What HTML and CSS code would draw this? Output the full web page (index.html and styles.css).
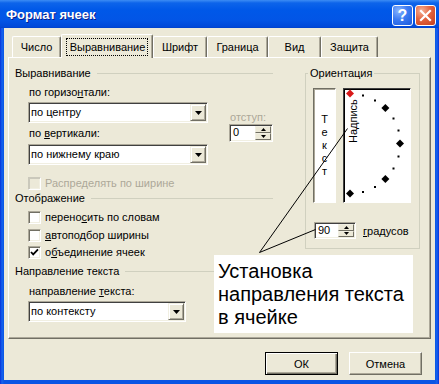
FILE: index.html
```html
<!DOCTYPE html>
<html lang="ru">
<head>
<meta charset="utf-8">
<title>Формат ячеек</title>
<link rel="stylesheet" href="styles.css">
</head>
<body>
<div class="window">
  <div class="titlebar">
    <span class="title">Формат ячеек</span>
    <div class="caption-buttons">
      <span class="cap-btn help">?</span>
      <span class="cap-btn close"><svg width="13" height="13" viewBox="0 0 13 13"><path d="M2 2 L11 11 M11 2 L2 11" stroke="#fff" stroke-width="2.2" stroke-linecap="square"/></svg></span>
    </div>
  </div>
  <div class="client">
    <div class="tabs">
      <div class="tab w-num">Число</div>
      <div class="tab active w-align"><span class="focus">Выравнивание</span></div>
      <div class="tab w-font">Шрифт</div>
      <div class="tab w-border">Граница</div>
      <div class="tab w-view">Вид</div>
      <div class="tab w-prot">Защита</div>
    </div>
    <div class="panel">
      <div class="left">
        <div class="group-title">Выравнивание</div>
        <div class="align-row">
          <div class="align-main">
            <div class="label">по горизо<u>н</u>тали:</div>
            <div class="combo combo-wide"><span class="combo-text">по центру</span><span class="drop"><svg width="7" height="4" viewBox="0 0 7 4"><path d="M0 0H7L3.5 4Z" fill="#000"/></svg></span></div>
            <div class="label gap3">по <u>в</u>ертикали:</div>
            <div class="combo combo-wide gap4"><span class="combo-text">по нижнему краю</span><span class="drop"><svg width="7" height="4" viewBox="0 0 7 4"><path d="M0 0H7L3.5 4Z" fill="#000"/></svg></span></div>
          </div>
          <div class="indent">
            <div class="label disabled">отступ:</div>
            <div class="spin spin-indent"><span class="spin-text">0</span><span class="spin-btns"><span class="spin-b"><svg width="5" height="3" viewBox="0 0 5 3"><path d="M0 3H5L2.5 0Z" fill="#000"/></svg></span><span class="spin-b"><svg width="5" height="3" viewBox="0 0 5 3"><path d="M0 0H5L2.5 3Z" fill="#000"/></svg></span></span></div>
          </div>
        </div>
        <div class="check check-disabled disabled"><span class="box"></span><span>Распределять по ширине</span></div>
        <div class="group-title gt-display">Отображение</div>
        <div class="check c1"><span class="box"></span><span>перено<u>с</u>ить по словам</span></div>
        <div class="check c2"><span class="box"></span><span><u>а</u>втоподбор ширины</span></div>
        <div class="check c3"><span class="box"><svg width="11" height="11" viewBox="0 0 11 11"><path d="M2 5 L4.2 7.4 L9 2.4" fill="none" stroke="#000" stroke-width="1.8"/></svg></span><span>о<u>б</u>ъединение ячеек</span></div>
        <div class="group-title gt-dir">Направление текста</div>
        <div class="label gap6">направление <u>т</u>екста:</div>
        <div class="combo combo-dir"><span class="combo-text">по контексту</span><span class="drop"><svg width="7" height="4" viewBox="0 0 7 4"><path d="M0 0H7L3.5 4Z" fill="#000"/></svg></span></div>
      </div>
      <fieldset class="orient">
        <legend>Ориентация</legend>
        <div class="orient-boxes">
          <div class="vtext"><span>Т</span><span>е</span><span>к</span><span>с</span><span>т</span></div>
          <div class="dial">
            <svg width="66" height="113" viewBox="0 0 66 113">
              <text class="dial-label" transform="translate(13 54) rotate(-90)">Надпись</text>
              <rect x="18" y="5.5" width="2" height="2" fill="#000"/>
              <rect x="30" y="10.5" width="2" height="2" fill="#000"/>
              <rect x="48.5" y="28.5" width="2" height="2" fill="#000"/>
              <rect x="53.5" y="40.5" width="2" height="2" fill="#000"/>
              <rect x="53.5" y="66.5" width="2" height="2" fill="#000"/>
              <rect x="48.5" y="78.5" width="2" height="2" fill="#000"/>
              <rect x="30" y="97" width="2" height="2" fill="#000"/>
              <rect x="18" y="102" width="2" height="2" fill="#000"/>
              <path d="M6 0.5 L10 4.5 L6 8.5 L2 4.5 Z" fill="#D81818"/>
              <path d="M41.4 15.1 L45.4 19.1 L41.4 23.1 L37.4 19.1 Z" fill="#000"/>
              <path d="M56 50.5 L60 54.5 L56 58.5 L52 54.5 Z" fill="#000"/>
              <path d="M41.4 85.9 L45.4 89.9 L41.4 93.9 L37.4 89.9 Z" fill="#000"/>
              <path d="M6 100.5 L10 104.5 L6 108.5 L2 104.5 Z" fill="#000"/>
            </svg>
          </div>
        </div>
        <div class="deg-row">
          <div class="spin spin-deg"><span class="spin-text">90</span><span class="spin-btns"><span class="spin-b"><svg width="5" height="3" viewBox="0 0 5 3"><path d="M0 3H5L2.5 0Z" fill="#000"/></svg></span><span class="spin-b"><svg width="5" height="3" viewBox="0 0 5 3"><path d="M0 0H5L2.5 3Z" fill="#000"/></svg></span></span></div>
          <span class="deg-label"><u>г</u>радусов</span>
        </div>
      </fieldset>
    </div>
    <div class="buttons">
      <button class="btn default">ОК</button>
      <button class="btn">Отмена</button>
    </div>
  </div>
  <svg class="pointer" width="439" height="384" viewBox="0 0 439 384">
    <path d="M259.5 252.5 L347.5 128.5 M259.5 252.5 L315.5 229.5" stroke="#000" stroke-width="1" fill="none"/>
  </svg>
  <div class="callout">Установка<br>направления текста<br>в ячейке</div>
</div>
</body>
</html>
```
FILE: styles.css
```css
* { box-sizing: border-box; }
html, body { margin: 0; padding: 0; }
body {
  width: 439px;
  height: 384px;
  overflow: hidden;
  font-family: "Liberation Sans", Arial, sans-serif;
  font-size: 11px;
  color: #000;
  background: #0A4FD8;
}
u { text-decoration: underline; text-underline-offset: 1px; }

.window {
  position: relative;
  width: 439px;
  height: 384px;
  background: linear-gradient(90deg, #0831D9 0, #1663EE 2px, #0A55E4 4px, #0A55E4 435px, #1663EE 437px, #0831D9 439px);
  display: flex;
  flex-direction: column;
}

.titlebar {
  height: 28px;
  flex: none;
  display: flex;
  align-items: center;
  padding: 0 3px 0 6px;
  background: linear-gradient(#3C8CF4 0, #0D64EA 3px, #0058E8 10px, #0255E6 20px, #0048D8 27px, #0040C8 28px);
}
.title {
  color: #fff;
  font-weight: bold;
  font-size: 13px;
  text-shadow: 1px 1px 0 #0A1E8C;
  padding-top: 1px;
}
.caption-buttons {
  margin-left: auto;
  display: flex;
  gap: 2px;
  padding-top: 3px;
}
.cap-btn {
  width: 21px;
  height: 21px;
  border: 1px solid #fff;
  border-radius: 3px;
  display: flex;
  align-items: center;
  justify-content: center;
  color: #fff;
  font-weight: bold;
  font-size: 16px;
}
.help { background: radial-gradient(circle at 30% 25%, #8AB6FF 0, #3D7CF2 45%, #1B58DC 100%); }
.close { background: radial-gradient(circle at 30% 25%, #F5B196 0, #E2633F 45%, #C43E1C 100%); }

.client {
  flex: 1;
  margin: 0 4px 4px;
  background: #ECE9D8;
  padding: 6px 4px 0;
  display: flex;
  flex-direction: column;
}

.tabs {
  display: flex;
  align-items: flex-end;
  padding-left: 4px;
  position: relative;
  z-index: 1;
}
.tab {
  height: 21px;
  border-top: 1px solid #fff;
  border-left: 1px solid #fff;
  border-right: 1px solid #716F64;
  border-radius: 2px 2px 0 0;
  box-shadow: inset -1px 0 0 #ACA899;
  background: #ECE9D8;
  text-align: center;
  line-height: 17px;
  padding-top: 2px;
}
.tab.active {
  height: 24px;
  margin-bottom: -1px;
  padding-top: 4px;
  line-height: 14px;
}
.focus {
  display: inline-block;
  outline: 1px dotted #000;
  padding: 1px 2px 1px 3px;
}
.w-num { width: 49px; }
.w-align { width: 92px; }
.w-font { width: 54px; }
.w-border { width: 61px; }
.w-view { width: 53px; }
.w-prot { width: 57px; }

.panel {
  height: 282px;
  flex: none;
  border: 1px solid;
  border-color: #fff #716F64 #716F64 #fff;
  box-shadow: inset -1px -1px 0 #ACA899;
  display: flex;
  align-items: flex-start;
  padding: 8px 0 0 6px;
}

.left { width: 258px; flex: none; }

.group-title {
  display: flex;
  align-items: center;
  height: 14px;
  line-height: 14px;
}
.group-title::after {
  content: "";
  flex: 1;
  height: 1px;
  background: #D0D0BF;
  margin-left: 6px;
  margin-top: 1px;
}
.gt-display { margin-top: 1px; }
.gt-dir { margin-top: 5px; }

.label { height: 14px; line-height: 14px; padding-left: 1px; white-space: nowrap; }
.disabled { color: #ACA899; }

.align-row { display: flex; }
.align-main { margin-left: 13px; width: 180px; }
.align-main > .label:first-child { margin-top: 5px; }
.align-main > .combo { margin-top: 3px; }
.align-main > .combo.gap4 { margin-top: 4px; }
.gap3 { margin-top: 3px; }
.gap6 { margin-top: 6px; margin-left: 13px; }

.indent { margin-left: 21px; padding-top: 30px; width: 44px; }

.combo {
  height: 21px;
  display: flex;
  align-items: stretch;
  background: #fff;
  border: 1px solid;
  border-color: #ACA899 #fff #fff #ACA899;
  box-shadow: inset 1px 1px 0 #404040, inset -1px -1px 0 #F1EFE2;
}
.combo-wide { width: 180px; }
.combo-dir { width: 158px; margin-left: 13px; margin-top: 3px; }
.combo-text { flex: 1; padding-left: 2px; line-height: 18px; white-space: nowrap; }
.drop {
  width: 16px;
  margin: 1px 1px 1px 0;
  background: #ECE9D8;
  border: 1px solid;
  border-color: #F1EFE2 #716F64 #716F64 #F1EFE2;
  box-shadow: inset 1px 1px 0 #fff, inset -1px -1px 0 #ACA899;
  display: flex;
  align-items: center;
  justify-content: center;
}

.spin {
  display: flex;
  background: #fff;
  border: 1px solid;
  border-color: #ACA899 #fff #fff #ACA899;
  box-shadow: inset 1px 1px 0 #404040, inset -1px -1px 0 #F1EFE2;
}
.spin-indent { width: 44px; height: 18px; }
.spin-deg { width: 42px; height: 17px; }
.spin-text { flex: 1; padding-left: 3px; line-height: 15px; }
.spin-btns {
  width: 16px;
  margin: 1px 1px 1px 0;
  display: flex;
  flex-direction: column;
}
.spin-b {
  flex: 1;
  background: #ECE9D8;
  border: 1px solid;
  border-color: #F1EFE2 #716F64 #716F64 #F1EFE2;
  display: flex;
  align-items: center;
  justify-content: center;
}

.check {
  display: flex;
  align-items: center;
  height: 13px;
  line-height: 13px;
  padding-left: 13px;
  gap: 4px;
  white-space: nowrap;
}
.check-disabled { margin-top: 12px; }
.c1 { margin-top: 6px; }
.c2 { margin-top: 5px; }
.c3 { margin-top: 4px; }
.box {
  width: 13px;
  height: 13px;
  flex: none;
  background: #fff;
  border: 1px solid;
  border-color: #ACA899 #fff #fff #ACA899;
  box-shadow: inset 1px 1px 0 #716F64, inset -1px -1px 0 #F1EFE2;
  display: flex;
  align-items: center;
  justify-content: center;
}
.check-disabled .box {
  background: #ECE9D8;
  border-color: #CAC8BB #fff #fff #CAC8BB;
  box-shadow: inset 1px 1px 0 #CAC8BB, inset -1px -1px 0 #F1EFE2;
}

.orient {
  margin: 0 0 0 32px;
  width: 115px;
  min-width: 0;
  padding: 8px 0 9px 0;
  border: 1px solid #D0D0BF;
}
.orient legend {
  padding: 0 2px;
  margin-left: 2px;
  line-height: 14px;
  height: 14px;
}
.orient-boxes {
  display: flex;
  gap: 7px;
  margin-left: 7px;
}
.vtext {
  width: 23px;
  height: 115px;
  background: #fff;
  border: 1px solid;
  border-color: #716F64 #fff #fff #716F64;
  box-shadow: inset 1px 1px 0 #ACA899;
  display: flex;
  flex-direction: column;
  align-items: center;
  padding-top: 24px;
  line-height: 13px;
}
.dial {
  width: 68px;
  height: 115px;
  background: #fff;
  border: 1px solid;
  border-color: #404040 #fff #fff #404040;
  box-shadow: inset 1px 1px 0 #000;
}
.dial svg { display: block; }
.dial-label { font-family: "Liberation Sans", Arial, sans-serif; font-size: 11px; fill: #000; }

.deg-row {
  display: flex;
  align-items: center;
  margin-top: 19px;
  margin-left: 8px;
  gap: 7px;
}

.buttons {
  display: flex;
  justify-content: flex-end;
  gap: 11px;
  margin-top: 13px;
  padding-right: 9px;
}
.btn {
  width: 73px;
  height: 23px;
  font-family: "Liberation Sans", Arial, sans-serif;
  font-size: 11px;
  color: #000;
  background: #ECE9D8;
  border: 1px solid;
  border-color: #fff #716F64 #716F64 #fff;
  box-shadow: inset -1px -1px 0 #ACA899;
  padding: 0;
}
.btn.default {
  border: 1px solid #000;
  box-shadow: inset 1px 1px 0 #fff, inset -1px -1px 0 #716F64, inset -2px -2px 0 #ACA899;
}

.pointer {
  position: absolute;
  left: 0;
  top: 0;
  pointer-events: none;
  z-index: 2;
}
.callout {
  position: absolute;
  left: 214px;
  top: 255px;
  width: 199px;
  height: 78px;
  background: #fff;
  font-size: 20px;
  line-height: 23px;
  padding: 5px 0 0 4px;
  white-space: nowrap;
  z-index: 3;
}
```
